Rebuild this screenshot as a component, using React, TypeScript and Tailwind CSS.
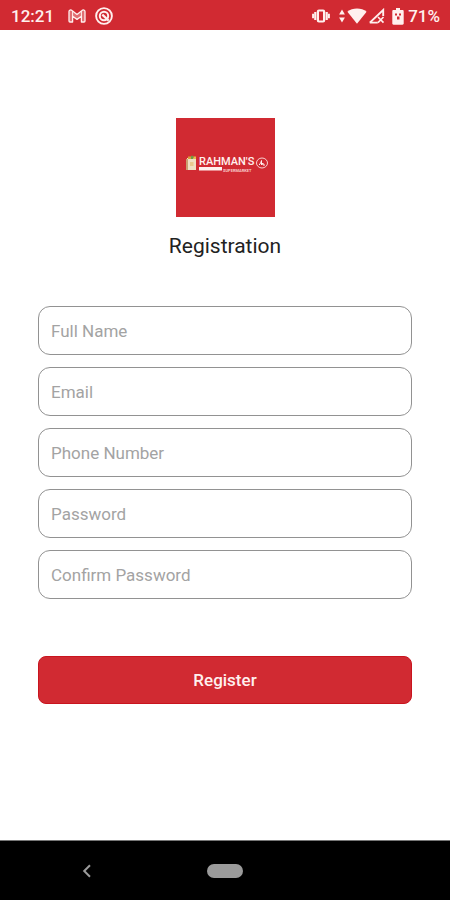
import React, { useState } from 'react';

type Field = {
    id: string;
    label: string;
    type: string;
    autoComplete: string;
};

const fields: Field[] = [
    { id: 'fullName', label: 'Full Name', type: 'text', autoComplete: 'name' },
    { id: 'email', label: 'Email', type: 'email', autoComplete: 'email' },
    { id: 'phone', label: 'Phone Number', type: 'tel', autoComplete: 'tel' },
    { id: 'password', label: 'Password', type: 'password', autoComplete: 'new-password' },
    { id: 'confirmPassword', label: 'Confirm Password', type: 'password', autoComplete: 'new-password' },
];

function StatusBar() {
    return (
        <header className="flex h-[30px] items-center justify-between bg-[#d12a32] pt-[2px] pr-[10px] pl-[11px] text-[#fff0ee]">
            <div className="flex items-center">
                <span className="text-[17px] leading-5 font-medium">12:21</span>
                <svg className="ml-[14px] h-[14px] w-[18px]" viewBox="0 0 18 14" fill="none" stroke="currentColor" strokeWidth="1.3" strokeLinejoin="round" aria-label="Gmail">
                    <path d="M1 12V2.600C1 1 2.800.5 4 1.500l5 3.900 5-3.900c1.200-1 3-.5 3 1.100V12c0 .6-.4 1-1 1h-2.600V7.200L9 10.400 4.600 7.200V13H2c-.6 0-1-.4-1-1Z" fill="currentColor" fillOpacity="0.35" />
                    <path d="M4.600 7.200V2M13.400 7.200V2" strokeWidth="1" />
                </svg>
                <svg className="ml-[9px] h-[18px] w-[18px]" viewBox="0 0 18 18" fill="none" stroke="currentColor" aria-hidden="true">
                    <circle cx="9" cy="9" r="7.900" strokeWidth="1.900" />
                    <circle cx="9" cy="9" r="4.200" strokeWidth="2" />
                    <path d="m7.300 7.600 6.400 6" strokeWidth="2.200" />
                </svg>
            </div>
            <div className="flex items-center">
                <svg className="h-[14px] w-[18px]" viewBox="0 0 18 14" fill="none" stroke="currentColor" aria-label="Vibrate">
                    <rect x="5.900" y="1.500" width="6.200" height="11" rx="1" strokeWidth="2.200" />
                    <path d="M3.300 3v8M14.700 3v8" strokeWidth="2.200" />
                    <path d="M1.100 4.800v4.400M16.900 4.800v4.400" strokeWidth="2" />
                </svg>
                <svg className="ml-[9px] h-[14px] w-[6px]" viewBox="0 0 6 14" fill="currentColor" aria-hidden="true">
                    <path d="M3 .5 5.900 5.500H.1ZM3 13.500.1 8.500h5.800Z" />
                </svg>
                <svg className="ml-[2px] h-[16px] w-[20px]" viewBox="0 0 20 16" fill="currentColor" aria-label="Wi-Fi">
                    <path d="M10 15.700.4 3.700C3 1.500 6.300.4 10 .4s7 1.100 9.600 3.300Z" />
                </svg>
                <svg className="ml-[1px] h-[16px] w-[17px]" viewBox="0 0 17 16" aria-label="Mobile signal">
                    <path d="M1.800 14.600 15.200 2v6M1.800 14.600h8" fill="none" stroke="currentColor" strokeWidth="1.900" />
                    <path d="m10 9 5.500 5.600M15.500 9 10 14.600" fill="none" stroke="currentColor" strokeWidth="1.600" />
                </svg>
                <svg className="ml-[7px] h-[17px] w-[12px]" viewBox="0 0 12 17" aria-label="Battery">
                    <path d="M4 0h4v2h2.500c.7 0 1.200.5 1.200 1.200v12.300c0 .7-.5 1.200-1.200 1.200h-9c-.7 0-1.200-.5-1.200-1.200V3.200C.3 2.500.8 2 1.500 2H4Z" fill="currentColor" />
                    <path d="M3 5.500h2v2H3ZM7 5.500h2v2H7ZM5 8.500h2.500v3H5Z" fill="#d12a32" />
                </svg>
                <span className="ml-1 text-[17px] leading-5 font-medium">71%</span>
            </div>
        </header>
    );
}

function Logo() {
    return (
        <svg className="h-[99px] w-[99px] bg-[#d12a32]" viewBox="0 0 99 99" role="img" aria-label="Rahman's Supermarket">
            {/* grocery bag */}
            <path d="M11 40h9v12h-9z" fill="#f1dfc4" />
            <path d="M10 41h2v11h-2z" fill="#c9a06f" />
            <path d="M12 38.500h3V41h-3z" fill="#d9a13a" />
            <path d="M15 37.800h2.500V41H15z" fill="#6f9b45" />
            <path d="M17.500 38.500H20V41h-2.500z" fill="#e5bf4a" />
            <path d="M14 44h3.500v4H14z" fill="#e9c98f" />
            <text x="23" y="47" fill="#fff0ee" fontSize="11" fontWeight="500" className="font-[Roboto,sans-serif]">RAHMAN'S</text>
            <path d="M23 49h23v3.500H23z" fill="#fff0ee" />
            <text x="47" y="54" fill="#f7c9c9" fontSize="4" fontWeight="700">SUPERMARKET</text>
            <ellipse cx="86" cy="45" rx="5.500" ry="5" fill="none" stroke="#f7d0d0" strokeWidth="1" />
            <path d="M83 47c1.500-1 2-3.500 2.500-4.500v4.500l1.500-2v2h2" fill="none" stroke="#fff0ee" strokeWidth="1" />
        </svg>
    );
}

function NavigationBar() {
    return (
        <nav className="grid h-[60px] grid-cols-[1fr_36px_1fr] items-center border-t border-[#777] bg-black" aria-label="System navigation">
            <button type="button" aria-label="Back" className="ml-[79px] flex h-10 w-4 items-center justify-center text-[#9b9b9b]">
                <svg className="h-[14px] w-[10px]" viewBox="0 0 10 14" fill="none" stroke="currentColor" strokeWidth="2">
                    <path d="M8 1.200 2.200 7 8 12.800" />
                </svg>
            </button>
            <button type="button" aria-label="Home" className="h-[14px] w-9 rounded-full bg-[#9b9b9b]" />
        </nav>
    );
}

export default function App() {
    const [values, setValues] = useState<Record<string, string>>({});

    return (
        <div className="flex min-h-screen flex-col bg-white font-[Roboto,sans-serif]">
            <StatusBar />

            <main className="flex flex-1 flex-col px-[38px] pt-[88px]">
                <div className="flex flex-col items-center gap-[13px]">
                    <Logo />
                    <h1 className="text-[21px] leading-8 text-[#222]">Registration</h1>
                </div>

                <form className="mt-11 mb-10 flex flex-col gap-3" onSubmit={(e) => e.preventDefault()}>
                    {fields.map((field) => (
                        <div key={field.id} className="relative">
                            <input
                                id={field.id}
                                type={field.type}
                                autoComplete={field.autoComplete}
                                placeholder=" "
                                value={values[field.id] ?? ''}
                                onChange={(e) => setValues({ ...values, [field.id]: e.target.value })}
                                className="peer block h-[49px] w-full rounded-xl border border-[#929292] px-3 text-[17px] text-[#222]"
                            />
                            {/* sits in the box until something is typed */}
                            <label
                                htmlFor={field.id}
                                className="pointer-events-none invisible absolute inset-y-0 left-[13px] flex items-center pt-[2px] text-[17px] text-[#a3a3a3] peer-placeholder-shown:visible"
                            >
                                {field.label}
                            </label>
                        </div>
                    ))}

                    <button
                        type="submit"
                        className="mt-[45px] h-12 w-full rounded-lg border border-[#c9141e] bg-[#d12a32] pt-[2px] text-[17px] font-medium text-[#fff0ee]"
                    >
                        Register
                    </button>
                </form>
            </main>

            <NavigationBar />
        </div>
    );
}
